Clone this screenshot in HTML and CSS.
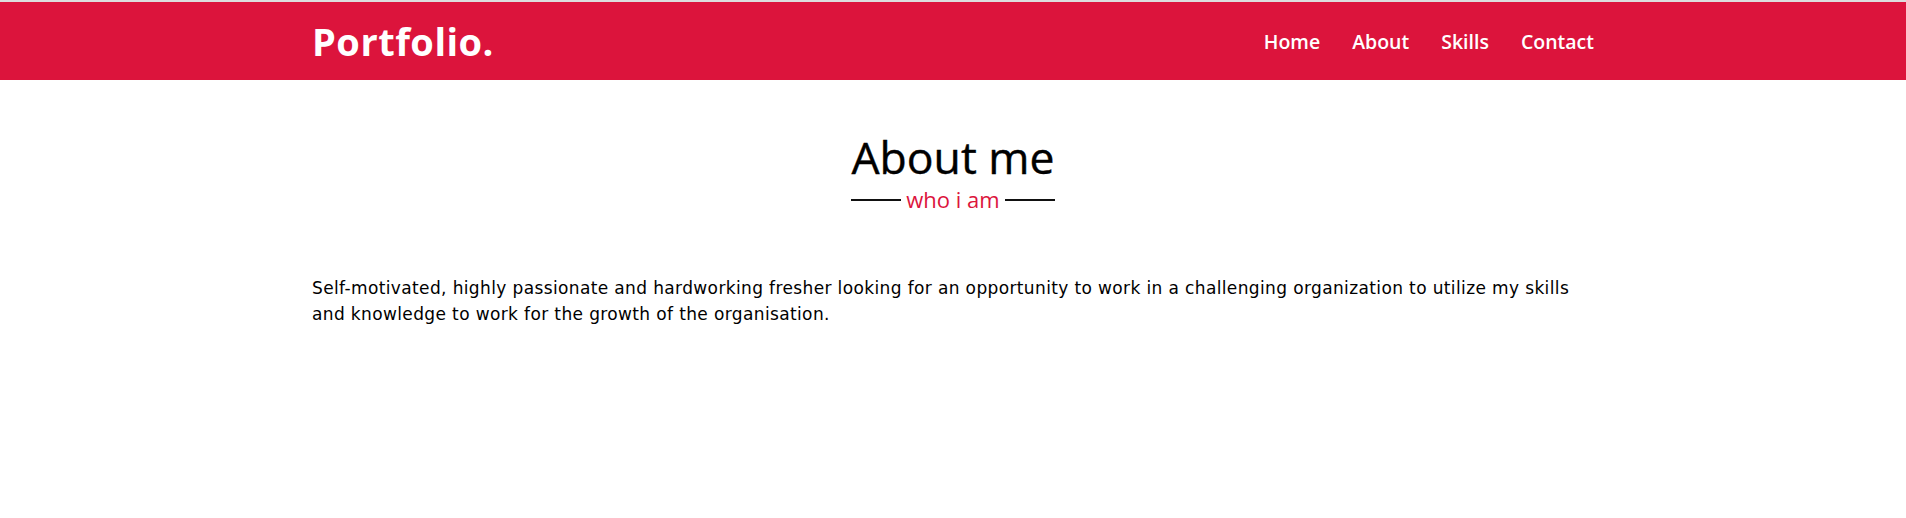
FILE: index.html
```html
<!DOCTYPE html>
<html lang="en">
<head>
<meta charset="utf-8">
<title>Portfolio</title>
<link rel="stylesheet" href="styles.css">
</head>
<body>
<div class="topline"></div>
<nav class="navbar">
  <div class="container nav-inner">
    <a class="logo" href="#">Portfolio.</a>
    <ul class="menu">
      <li><a href="#">Home</a></li>
      <li><a href="#">About</a></li>
      <li><a href="#">Skills</a></li>
      <li><a href="#">Contact</a></li>
    </ul>
  </div>
</nav>
<section class="about">
  <div class="container">
    <div class="title">
      <h2>About me</h2>
      <div class="subtitle"><span class="line"></span><span class="sub">who i am</span><span class="line"></span></div>
    </div>
    <p class="text">Self-motivated, highly passionate and hardworking fresher looking for an opportunity to work in a challenging organization to utilize my skills and knowledge to work for the growth of the organisation.</p>
  </div>
</section>
</body>
</html>
```
FILE: styles.css
```css
* { box-sizing: border-box; }
body {
  margin: 0;
  background: #fff;
  font-family: "Open Sans", "Liberation Sans", sans-serif;
}
.topline { height: 2px; background: #ddd; }
.container {
  width: 1282px;
  margin: 0 auto;
}
.navbar {
  background: #dc143c;
  height: 78px;
}
.nav-inner {
  height: 100%;
  display: flex;
  align-items: center;
  justify-content: space-between;
}
.logo {
  color: #fff;
  text-decoration: none;
  font-size: 38px;
  font-weight: 700;
  letter-spacing: 0.5px;
}
.menu {
  list-style: none;
  margin: 0;
  padding: 0;
  display: flex;
  gap: 32px;
}
.menu a {
  color: #fff;
  text-decoration: none;
  font-size: 19.5px;
  font-weight: 600;
}
.about { padding-top: 50px; }
.title {
  display: flex;
  flex-direction: column;
  align-items: center;
}
.title h2 {
  margin: 0;
  font-size: 44.5px;
  font-weight: 500;
  color: #000;
  line-height: 1.2;
  -webkit-text-stroke: 0.4px #000;
}
.subtitle {
  display: flex;
  align-items: center;
  gap: 5px;
  margin-top: 3px;
}
.line { width: 50px; height: 2px; background: #111; }
.sub { color: #dc143c; font-size: 22px; line-height: 1.2; }
.text {
  margin: 62px 0 0;
  font-family: "DejaVu Sans", "Open Sans", sans-serif;
  font-size: 17px;
  letter-spacing: 0.37px;
  line-height: 26px;
  color: #000;
}
```
